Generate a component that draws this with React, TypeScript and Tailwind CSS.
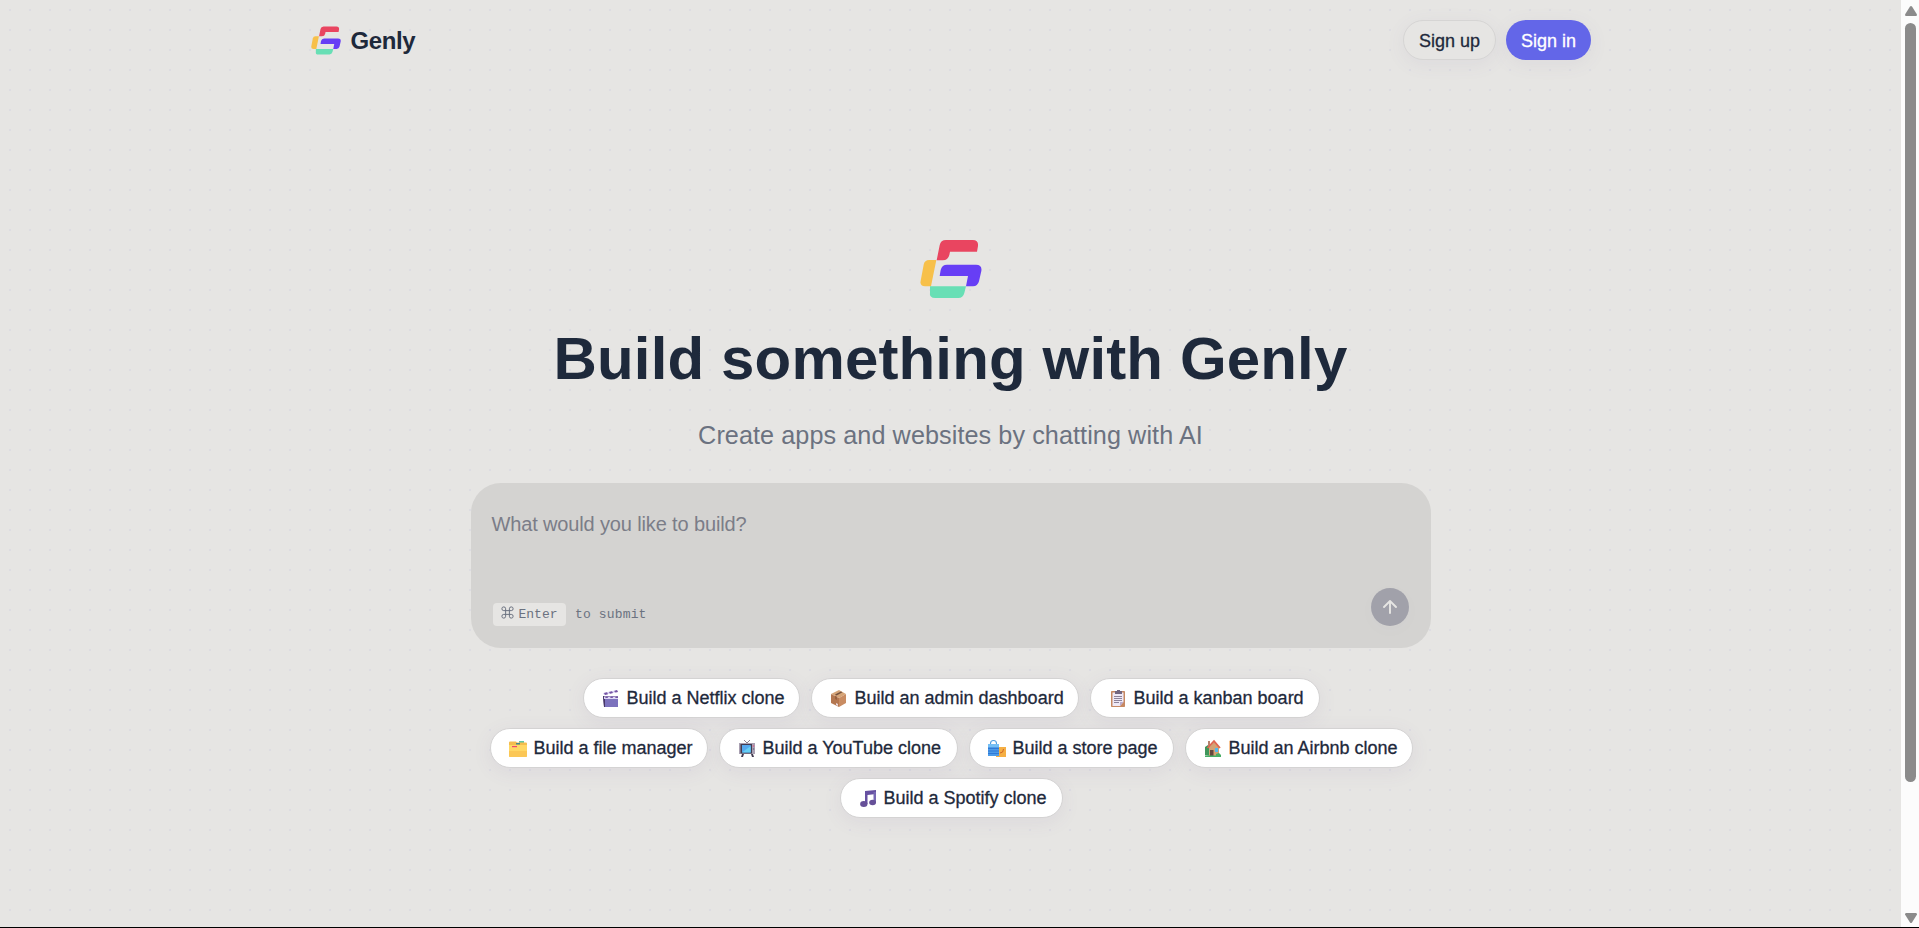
import type { ReactNode } from "react";

function Logo({ className }: { className: string }) {
  return (
    <svg viewBox="90 58 186 178" className={className} aria-hidden="true">
      <path fill="#e94560" d="M140 121 L149 76 Q152 60 168 60 H248 Q266 60 264 78 L261 95 H180 L178 105 Q174 121 158 121 Z" />
      <path fill="#f7c04a" d="M101 134 Q104 120 117 120 H139 L123 199 H105 Q89 199 92 182 Z" />
      <path fill="#673ef5" d="M149 168 L152 150 Q156 134 171 134 H258 Q277 134 274 153 L267 184 Q263 199 249 199 H228 L234 168 Z" />
      <path fill="#68dfb5" d="M120 199 H228 L223 219 Q219 234 205 234 H136 Q117 234 120 216 Z" />
    </svg>
  );
}

function Clapper() {
  return (
    <>
      <path fill="#594487" d="M2 8h15v11H3z" />
      <path fill="#7c72bd" d="M4 11h13v8H4z" />
      <path fill="#473767" d="M2 8h2v11H3z" />
      <path fill="#dcd6f4" d="M2 5l14-3 1 2L3 7zM3 8.500h14V11H3z" />
      <path fill="#7554a3" d="M3 5l3-.7 1 2-3 .7zM8 4l3-.7 1 1.700-3 .7zM13 3l3-1 1 2-2.500.4zM5 8.500h2.500L6.500 10H4zM10 8.500h2.500L11.500 10H9zM15 8.500h2V10h-3z" />
    </>
  );
}

function Package() {
  return (
    <>
      <path fill="#d5a477" d="M2 6l8-4 7 4-7 4z" />
      <path fill="#b47750" d="M2 6l8 4v9l-8-4z" />
      <path fill="#c98c62" d="M10 10l7-4v9l-7 4z" />
      <path fill="#71503f" d="M6 6.500l6-3 1.500.8-6 3.200z" />
      <path fill="#98613f" d="M6 7.800l2 1V12l-2-1z" />
      <path fill="#ead9dd" d="M7 15l2 1v2l-2-1z" />
    </>
  );
}

function Clipboard() {
  return (
    <>
      <rect x="3" y="3" width="14" height="16" rx=".7" fill="#c68862" />
      <path fill="#eee8f6" d="M4.500 4.500h11V14L12 18H4.500z" />
      <path fill="#b9aacd" d="M12 14h3.500L12 18z" />
      <path fill="#716680" d="M7 3h2V2h3v1h2v3H7z" />
      <path stroke="#8b829a" d="M6 8.500h8M6 10.500h8M6 12.500h8M6 14.500h5" />
    </>
  );
}

function Folders() {
  return (
    <>
      <path fill="#62c6a2" d="M11 3h5v3h-5z" />
      <path fill="#f4bd4f" d="M1 4.500Q1 3 3 3.500h5l1 1h9q1 0 1 1V9H1z" />
      <path fill="#46888f" d="M8 5h4v1.500H8z" />
      <path fill="#ffd765" d="M1 7h18v11q0 1-1 1H2q-1 0-1-1z" />
      <path fill="#fbc756" d="M1 13h18v5q0 1-1 1H2q-1 0-1-1z" />
      <path fill="#f0446f" d="M4 8h5v1.200H4z" />
    </>
  );
}

function Television() {
  return (
    <>
      <path stroke="#8c8391" fill="none" d="M7 2l3 3 3-3" />
      <path fill="#a9a0b2" d="M2 5h16v11H2z" />
      <path fill="#423b50" d="M3.500 6h11.500v9.500H3.500zM5 16h2l-1 3H4zM14 16h2l1 3h-2z" />
      <path fill="#55a8ee" d="M5 7h8.700v7.500H5z" />
      <path fill="#65d0f6" d="M5 14.500L13.700 8v6.500z" />
      <circle cx="16.500" cy="8" r=".8" fill="#e25884" />
      <circle cx="16.500" cy="11" r=".8" fill="#74647e" />
    </>
  );
}

function Bags() {
  return (
    <>
      <path fill="none" stroke="#4f9dde" strokeWidth="1.100" d="M3.500 8V5.500Q3.500 2.500 6.500 2.500T9.500 5.500V8" />
      <path fill="#4c9be8" d="M1 6h11v12H1z" />
      <path fill="#74bef4" d="M1 6h11v3H1z" />
      <path stroke="#286fd0" strokeWidth=".8" d="M1 10.500h11M1 13h11M1 15.500h11" />
      <path fill="#f5af44" d="M12 9h7v10H9v-1h3z" />
      <path fill="none" stroke="#cf6425" d="M16.500 11q0 4-3.500 4" />
    </>
  );
}

function House() {
  return (
    <>
      <path fill="#3f965b" d="M2 17V9l3-2 2 4v7z" />
      <path fill="#b6836e" d="M5 3h2v6H5z" />
      <path fill="#d3a275" d="M6 9l5-5 5 5v9H6z" />
      <path fill="none" stroke="#df6550" strokeWidth="1.800" d="M4.500 10l6.500-6.800L17 10" />
      <path fill="#65463e" d="M7 12h3.500v6H7z" />
      <path fill="#52b9ed" d="M12 10h3v4h-3z" />
      <path fill="#48ad65" d="M2 17.500h16V19H2zM13 16l3-1 2 2v2h-5z" />
    </>
  );
}

function Music() {
  return (
    <>
      <path fill="#6650a1" d="M7 3l11-1v4L9.500 7V16H7z" />
      <path fill="#7768b3" d="M15.500 4H18v11h-2.500z" />
      <ellipse cx="5.800" cy="16" rx="3.700" ry="3" fill="#665098" />
      <ellipse cx="14.600" cy="14.500" rx="3.400" ry="2.800" fill="#665098" />
    </>
  );
}

type Suggestion = { label: string; width: string; icon: ReactNode };

const rows: Suggestion[][] = [
  [
    { label: "Build a Netflix clone", width: "w-[217px]", icon: <Clapper /> },
    { label: "Build an admin dashboard", width: "w-[268px]", icon: <Package /> },
    { label: "Build a kanban board", width: "w-[230px]", icon: <Clipboard /> },
  ],
  [
    { label: "Build a file manager", width: "w-[218px]", icon: <Folders /> },
    { label: "Build a YouTube clone", width: "w-[239px]", icon: <Television /> },
    { label: "Build a store page", width: "w-[205px]", icon: <Bags /> },
    { label: "Build an Airbnb clone", width: "w-[228px]", icon: <House /> },
  ],
  [{ label: "Build a Spotify clone", width: "w-[223px]", icon: <Music /> }],
];

function Pill({ label, width, icon }: Suggestion) {
  return (
    <button className={`flex h-10 ${width} items-center gap-1.5 rounded-full border border-[#d4d3d3] bg-white pl-[17px] text-[18px] whitespace-nowrap shadow-[0_4px_20px_rgba(99,80,140,0.08)]`}>
      <svg viewBox="0 0 20 20" className="size-5 shrink-0" aria-hidden="true">{icon}</svg>
      <span className="pt-px [-webkit-text-stroke:0.3px]">{label}</span>
    </button>
  );
}

function Scrollbar() {
  return (
    <div className="flex w-[18px] shrink-0 flex-col items-center bg-[#fcfcfc] pt-1.5 pb-1 pl-px">
      <svg viewBox="0 0 12 10" className="h-2.5 w-3"><path fill="#8b8b8b" d="M5 .5q1-1 2 0l5 8q0 1.500-1 1.500H1q-1 0-1-1.500z" /></svg>
      <div className="mt-[7px] h-[759px] w-[11px] rounded-full bg-[#8b8b8b]" />
      <svg viewBox="0 0 12 10" className="mt-auto h-2.5 w-3"><path fill="#8b8b8b" d="M5 9.500q1 1 2 0l5-8Q12 0 11 0H1Q0 0 0 1.500z" /></svg>
    </div>
  );
}

export default function App() {
  return (
    <div className="flex h-[928px] w-full overflow-hidden border-b border-black bg-[#e6e5e3] font-['Liberation_Sans',Arial,sans-serif] text-[#1e293b]">
      <main className="flex min-w-0 flex-1 flex-col items-center bg-[radial-gradient(circle_at_center,#dddce2_1px,transparent_1px)] bg-size-[20px_20px]">
        <header className="flex h-20 w-[1280px] items-center justify-between">
          <div className="flex items-center gap-[10px]">
            <Logo className="h-[29px] w-[30px]" />
            <span className="pt-0.5 text-[24px] leading-8 font-bold tracking-[-0.4px]">Genly</span>
          </div>
          <div className="flex gap-2.5">
            <button className="h-10 w-[93px] rounded-full border border-[#d6d5d4] bg-[#e6e5e3] pt-0.5 pl-px text-[18px] shadow-[0_4px_20px_rgba(99,80,140,0.07)] [-webkit-text-stroke:0.3px]">Sign up</button>
            <button className="h-10 w-[85px] rounded-full bg-[#6366e8] pt-0.5 pl-px text-[18px] text-white shadow-[0_4px_20px_rgba(99,80,140,0.07)] [-webkit-text-stroke:0.3px]">Sign in</button>
          </div>
        </header>
        <section className="flex flex-col items-center pt-[159px]">
          <Logo className="h-[60px] w-[62px]" />
          <h1 className="mt-[25px] text-[60px] leading-[70px] font-bold tracking-[0.15px] whitespace-nowrap">Build something with Genly</h1>
          <p className="mt-[25px] text-[25.2px] leading-8 tracking-[0.08px] whitespace-nowrap text-[#6b7280]">Create apps and websites by chatting with AI</p>
          <form className="mt-[32px] flex h-[165px] w-[960px] flex-col justify-between rounded-[30px] bg-[#d4d3d1] pt-[27px] pr-[22px] pb-[22px] pl-[21px]">
            <div className="text-[20px] leading-7 tracking-[-0.14px] text-[#7b7d88]">What would you like to build?</div>
            <div className="flex items-end justify-between">
              <div className="flex h-[23px] items-center gap-[9.5px] pl-px font-['Liberation_Mono',monospace] text-[13px] text-[#6b7280]">
                <kbd className="flex h-[23px] w-[73px] items-center gap-1 rounded bg-[#e6e5e3] pl-[7px] font-['Liberation_Mono',monospace]">
                  <svg viewBox="0 0 24 24" className="-mt-1 h-[15px] w-[15px] shrink-0" fill="none" stroke="#6b7280" strokeWidth="1.600" aria-hidden="true"><path d="M15 6v12a3 3 0 1 0 3-3H6a3 3 0 1 0 3 3V6a3 3 0 1 0-3 3h12a3 3 0 1 0-3-3" /></svg>
                  <span>Enter</span>
                </kbd>
                <span className="tracking-[0.15px]">to submit</span>
              </div>
              <button type="button" className="flex size-[38px] items-center justify-center rounded-full bg-[#a1a1aa] shadow-[0_4px_20px_rgba(99,80,140,0.02)]" aria-label="Submit">
                <svg viewBox="0 0 14 14" className="size-3.5" fill="none" stroke="#e6e5e3" strokeWidth="1.900" strokeLinecap="round" strokeLinejoin="round"><path d="M7 13V1M1 7l6-6 6 6" /></svg>
              </button>
            </div>
          </form>
          <div className="mt-[30px] flex flex-col items-center gap-2.5 pl-px">
            {rows.map((row, index) => (
              <div key={index} className="flex gap-[11px]">
                {row.map((item) => <Pill key={item.label} {...item} />)}
              </div>
            ))}
          </div>
        </section>
      </main>
      <Scrollbar />
    </div>
  );
}
